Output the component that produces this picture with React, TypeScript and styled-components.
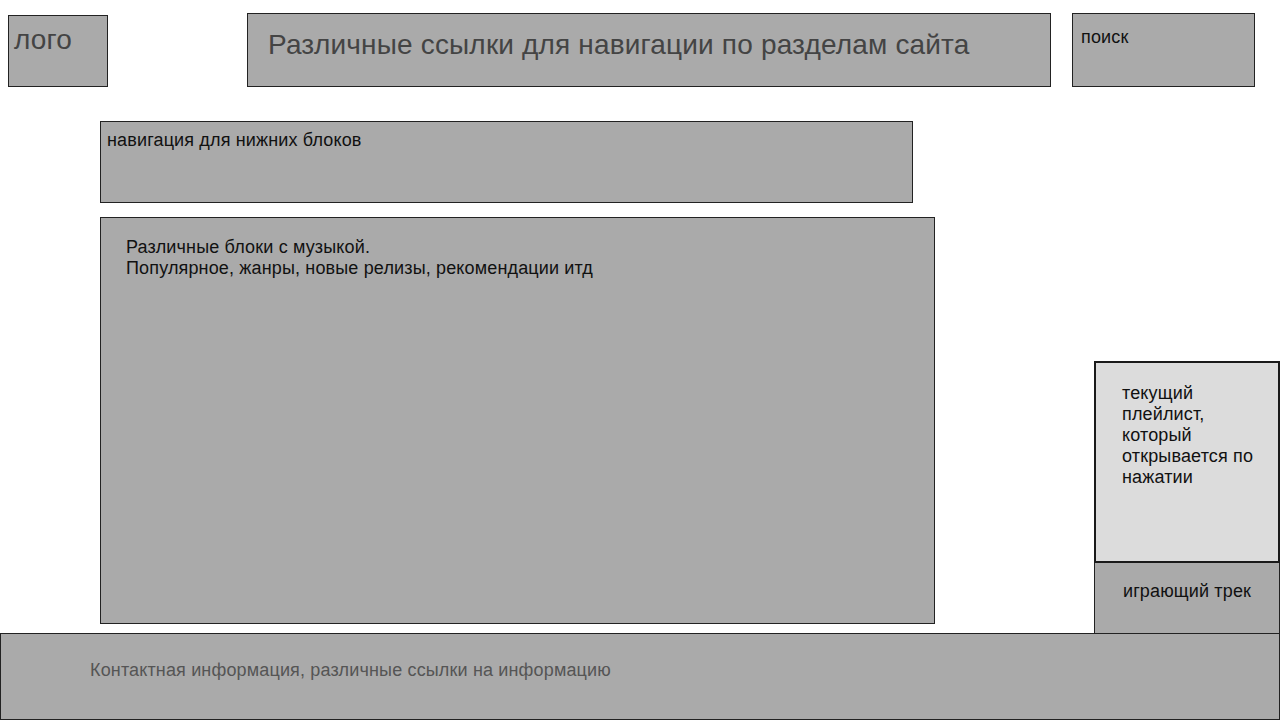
import React from "react";
import styled, { createGlobalStyle } from "styled-components";

const GlobalStyle = createGlobalStyle`
  *, *::before, *::after {
    box-sizing: border-box;
  }

  body {
    margin: 0;
    background-color: #ffffff;
    font-family: "Liberation Sans", Arial, sans-serif;
  }
`;

class App extends React.Component<{}, {}> {
  render = () => {
    return (
      <Page>
        <GlobalStyle />
        <Header>
          <Logo>лого</Logo>
          <MainNav>Различные ссылки для навигации по разделам сайта</MainNav>
          <Search>поиск</Search>
        </Header>
        <Main>
          <Content>
            <SectionNav>навигация для нижних блоков</SectionNav>
            <MusicBlocks>
              Различные блоки с музыкой.
              <br />
              Популярное, жанры, новые релизы, рекомендации итд
            </MusicBlocks>
          </Content>
          <Player>
            <Playlist>текущий плейлист, который открывается по нажатии</Playlist>
            <NowPlaying>играющий трек</NowPlaying>
          </Player>
        </Main>
        <Footer>
          Контактная информация, различные ссылки на информацию
        </Footer>
      </Page>
    );
  };
}

const Page = styled.div`
  display: flex;
  flex-direction: column;
  width: 1280px;
  height: 720px;
  overflow: hidden;
`;

const Block = styled.div`
  background-color: #aaaaaa;
  border: 1px solid #222222;
  font-size: 18px;
  letter-spacing: 0.15px;
  color: #111111;
`;

const Header = styled.header`
  display: flex;
  align-items: flex-start;
  padding-top: 13px;
  height: 87px;
`;

const Logo = styled(Block)`
  width: 100px;
  height: 72px;
  margin: 2px 0 0 8px;
  padding: 8px 0 0 5px;
  font-size: 28px;
  letter-spacing: 0.17px;
  color: #444444;
`;

const MainNav = styled(Block)`
  width: 804px;
  height: 74px;
  margin-left: 139px;
  padding: 15px 0 0 20px;
  font-size: 28px;
  letter-spacing: 0.17px;
  color: #444444;
`;

const Search = styled(Block)`
  width: 183px;
  height: 74px;
  margin-left: 21px;
  padding: 13px 0 0 8px;
`;

const Main = styled.main`
  display: flex;
  height: 546px;
`;

const Content = styled.div`
  display: flex;
  flex-direction: column;
  gap: 14px;
  margin-left: 100px;
  padding-top: 34px;
`;

const SectionNav = styled(Block)`
  width: 813px;
  height: 82px;
  padding: 8px 0 0 6px;
`;

const MusicBlocks = styled(Block)`
  width: 835px;
  height: 407px;
  padding: 19px 0 0 25px;
`;

const Player = styled.aside`
  display: flex;
  flex-direction: column;
  align-self: flex-end;
  width: 186px;
  margin-left: auto;
`;

const Playlist = styled(Block)`
  height: 202px;
  padding: 20px 20px 0 26px;
  background-color: #dcdcdc;
  border: 2px solid #1a1a1a;
`;

const NowPlaying = styled(Block)`
  height: 70px;
  padding-top: 18px;
  border-top: none;
  border-bottom: none;
  text-align: center;
`;

const Footer = styled(Block)`
  flex: 1;
  padding: 26px 0 0 89px;
  color: #555555;
`;

export default App;
